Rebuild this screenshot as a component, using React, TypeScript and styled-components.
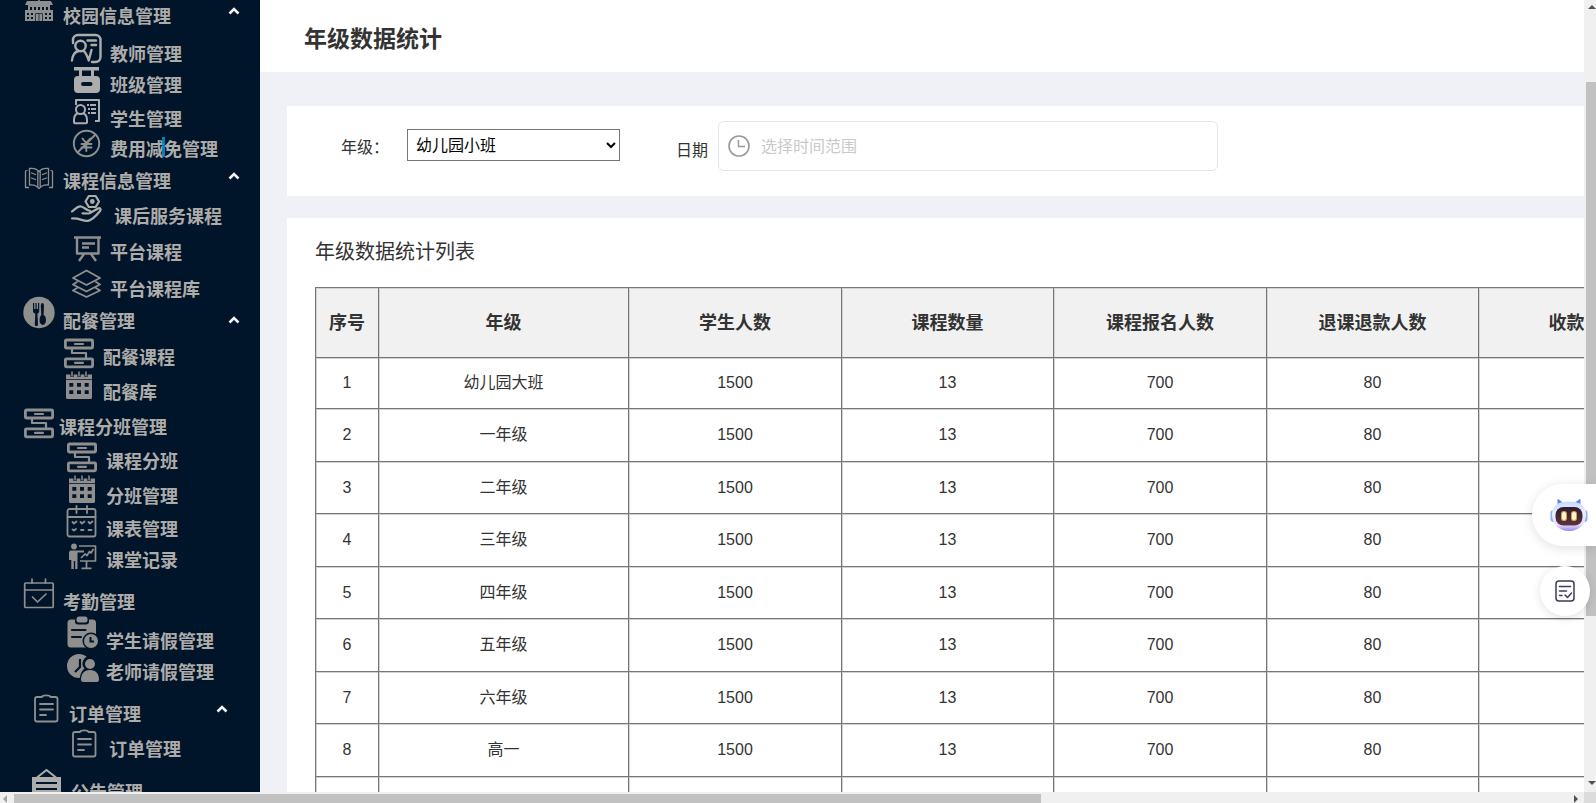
import React from "react";
import styled, { createGlobalStyle } from "styled-components";

const NAVY = "#001529";

const GlobalStyle = createGlobalStyle`
  *, *::before, *::after { box-sizing: border-box; }
  body {
    margin: 0;
    font-family: "Liberation Sans", "Noto Sans CJK SC", sans-serif;
    font-size: 16px;
    color: #333;
    overflow: hidden;
  }
`;

/* ---------- page frame ---------- */

const Frame = styled.div`
  display: grid;
  grid-template-columns: minmax(0, 1fr) 12px;
  grid-template-rows: minmax(0, 1fr) 11px;
  height: 100vh;
  background: #f0f0f0;
`;

const Shell = styled.div`
  display: flex;
  overflow: hidden;
  background: #f0f1f6;
`;

const VTrack = styled.div`
  display: flex;
  flex-direction: column;
  align-items: flex-end;
  padding: 3px 0 6px 2px;
  overflow: hidden;
`;

const HTrack = styled.div`
  display: flex;
  align-items: flex-end;
  padding: 2px 4px 0 2px;
  overflow: hidden;
`;

const VThumb = styled.div`
  width: 100%;
  flex: 534 0 0;
  background: #c1c1c1;
`;

const HThumb = styled.div`
  align-self: stretch;
  flex: 1027 0 0;
  background: #c1c1c1;
`;

const TrackSpace = styled.div<{ $grow: number }>`
  flex: ${(p) => p.$grow} 0 0;
`;

const ArrowSvg = styled.svg<{ $tone?: string }>`
  display: block;
  flex: none;
  fill: ${(p) => p.$tone ?? "#505050"};
`;

const Corner = styled.div`
  background: #dcdcdc;
`;

/* ---------- sidebar ---------- */

const Sidebar = styled.nav`
  flex: 0 0 260px;
  background: ${NAVY};
  color: #aeacaa;
  overflow: hidden;
`;

const List = styled.ul`
  list-style: none;
  margin: 0;
  padding: 0;
`;

interface RowProps {
  $h: number;
  $indent: number;
  $gap?: number;
  $end?: number;
}

const rowStyle = (p: RowProps) => `
  display: flex;
  align-items: flex-end;
  width: 100%;
  height: ${p.$h}px;
  padding: 0 ${p.$end ?? 20}px 0 ${p.$indent}px;
  gap: ${p.$gap ?? 8}px;
  border: 0;
  background: none;
  color: inherit;
  font: bold 18px/22px "Liberation Sans", "Noto Sans CJK SC", sans-serif;
  text-align: left;
  text-decoration: none;
  white-space: nowrap;
  cursor: pointer;
`;

const GroupButton = styled.button<RowProps>`
  ${rowStyle}
`;

const NavLink = styled.a<RowProps>`
  ${rowStyle}
`;

const IconBox = styled.svg<{ $tone: string }>`
  flex: none;
  display: block;
  width: 32px;
  height: 32px;
  overflow: visible;
  color: ${(p) => p.$tone};
`;

const Label = styled.span`
  position: relative;
`;

const Caret = styled.span`
  position: absolute;
  left: 52px;
  top: -2px;
  width: 3px;
  height: 20px;
  background: #0091cc;
  opacity: 0.85;
`;

const Chevron = styled.svg<{ $h: number }>`
  display: block;
  flex: none;
  width: 12px;
  height: ${(p) => p.$h}px;
  margin-left: auto;
`;

type IconName =
  | "school" | "teacher" | "class" | "student" | "yen" | "book" | "hand" | "board"
  | "layers" | "meal" | "flow" | "calendar" | "timetable" | "record" | "attendance"
  | "leave" | "teacherLeave" | "order" | "notice";

const line = (width: number) => ({
  fill: "none",
  stroke: "currentColor",
  strokeWidth: width,
  strokeLinejoin: "round" as const,
  strokeLinecap: "round" as const,
});

const icons: Record<IconName, React.ReactNode> = {
  school: (
    <>
      <path fill="currentColor" d="M4 5h24l2 4H2z M15.2 1h1.6v4h-1.6z" />
      <path
        fill="currentColor"
        fillRule="evenodd"
        d="M5 9h22v5h3v11H2V14h3z M7 11v3h2v-3z M11 11v3h2v-3z M15 11v3h2v-3z M19 11v3h2v-3z M23 11v3h2v-3z M4 17v2h2v-2z M8 17v2h2v-2z M22 17v2h2v-2z M26 17v2h2v-2z M4 21v2h2v-2z M8 21v2h2v-2z M22 21v2h2v-2z M26 21v2h2v-2z"
      />
      <path d="M12.5 25v-7.5h7V25M16 17.5V25" fill="none" stroke={NAVY} strokeWidth="0.7" />
    </>
  ),
  teacher: (
    <g {...line(2.4)}>
      <path d="M3 9V6a5 5 0 0 1 5-5h17.500a5 5 0 0 1 5 5v17a5 5 0 0 1-5 5H22" />
      <circle cx="10.500" cy="12" r="5.200" />
      <path d="M2 26.500c.4-5 3-8.500 6.500-9.500M13.500 17c2.500 1.500 3.500 4 5.200 9.500l2.800-10.500M17.500 6.500h8.500M21.500 11h4.500" />
    </g>
  ),
  class: (
    <path
      fill="currentColor"
      fillRule="evenodd"
      d="M4 2h25v3.500h-5V11h2a4 4 0 0 1 4 4v9a4 4 0 0 1-4 4H8a4 4 0 0 1-4-4v-9a4 4 0 0 1 4-4h1V5.500H4z M12 5.500V11h9V5.500z M13 17a2 2 0 0 0 0 4h7.500a2 2 0 0 0 0-4z"
    />
  ),
  student: (
    <g {...line(2)} strokeLinecap="butt">
      <path d="M6 6V1h23v21h-4" />
      <circle cx="10.500" cy="10.500" r="4.500" />
      <path d="M7.500 14.500C5 15.500 4 18 4 21v2.200q0 1 1 1h11q1 0 1-1V21c0-3-1-5.500-3.500-6.500" />
      <path d="M17 6h9M18 10h8M18 14h8" strokeDasharray="2 1 7 0" />
    </g>
  ),
  yen: (
    <g {...line(1.9)}>
      <circle cx="16.500" cy="14.500" r="12.700" />
      <path d="M7.500 23.500 25.500 5.500M12.500 9.500l3.500 4.500 4.500-4.500M11.500 15h10M11.500 18.500h10M16.300 14v8" />
    </g>
  ),
  book: (
    <g {...line(1.3)}>
      <path d="M16 10.500C13.500 7.500 10 7 6.500 7.500v16.500c3.500-.5 7 .5 9.500 3.500 2.500-3 6-4 9.500-3.500V7.500C22 7 18.500 7.500 16 10.500zM14.800 10.500v16M17.200 10.500v16" />
      <path d="M4 9.500 2.500 10v16.500h3M28 9.500l1.500.500v16.500h-3" />
      <path d="M8.500 12l4 1.500M8.500 17l4 1.500M23.500 12l-4 1.500M23.500 17l-4 1.500" />
    </g>
  ),
  hand: (
    <g {...line(2.2)}>
      <path d="M15.500 5.500 18.800 0h6.900L29 5.500 25.700 11h-6.900z" />
      <circle cx="22.300" cy="5.500" r="1.300" />
      <path d="M2 15.500c3-2.500 6-5.500 9-5 3 .5 5 3.500 8 4 2.500.5 2 2.800-.5 3l-6-.2M20 17l8-4.500c2-1 3.500.5 2 2.500-4 5-8 9-12 9.800-5 .8-8-2.800-16-2.300" />
    </g>
  ),
  board: (
    <g {...line(2.4)} strokeLinecap="butt">
      <path d="M4 5.500h27M7 5.500V21.500h21.500V5.500M12 11.500h13M12 15.500h7M14 22l-5 7M21 22l5 7" />
    </g>
  ),
  layers: (
    <g {...line(1.9)}>
      <path d="M16.500 1.500 30 9l-13.500 7L3 9z" />
      <path d="M7 13l-4 2.500 13.500 7L30 15.500 26 13M7 19l-4 2.500 13.500 6.500L30 21.500 26 19" />
    </g>
  ),
  meal: (
    <>
      <circle cx="16" cy="11.500" r="15.700" fill="currentColor" />
      <path
        fill={NAVY}
        d="M10 2h1.200v6h1.300V2h1.200v6H15V2h1.200v8c0 1.500-.8 2.300-1.800 2.800l.6 10.500c0 2.500-3.200 2.500-3.200 0l.5-10.500c-1.400-.5-2.300-1.300-2.300-2.800z M17.800 5c0-4 3.200-4 3.200 0l-.4 9c2 1 2.400 3 2.400 5.300 0 2.700-1.300 4.700-3.200 4.700s-3.200-2-3.200-4.700c0-2.300.5-4.300 1.700-5.300z"
      />
    </>
  ),
  flow: (
    <g {...line(2.8)}>
      <rect x="2.400" y="3" width="27.200" height="8" rx="1" />
      <rect x="2.400" y="21.800" width="27.200" height="8" rx="1" />
      <path d="M12 7h8M12 25.800h8M9 11v5h14v6" strokeWidth="2.200" />
    </g>
  ),
  calendar: (
    <>
      <path
        fill="currentColor"
        fillRule="evenodd"
        d="M3 2.500h26V7H3z M3 7.800h26V25.500q0 1.500-1.500 1.500h-23Q3 27 3 25.500z M6.300 11V14.800h4V11z M14 11V14.800h4V11z M21.700 11V14.800h4V11z M6.300 18.200V22h4V18.200z M14 18.200V22h4V18.200z M21.700 18.200V22h4V18.200z"
      />
      <path d="M9 1v4M16 1v4M23 1v4" stroke={NAVY} strokeWidth="3.200" />
      <path d="M9-.5v5M16-.5v5M23-.5v5" stroke="currentColor" strokeWidth="1.500" />
    </>
  ),
  timetable: (
    <g {...line(1.800)}>
      <rect x="1.500" y="0" width="28" height="27.500" rx="2" />
      <path d="M1.500 8h28M10.500-3v7M21-3v7" />
      <path d="M6.500 13l1.500 1.500 2.500-2M14.500 13l1.500 1.500 2.500-2M22.500 13l1.500 1.500 2.500-2M6.500 20.500l1.500 1 2-1.500M15 21h2.500M22.500 21h3" />
    </g>
  ),
  record: (
    <g {...line(1.700)} strokeLinecap="butt">
      <circle cx="8" cy="6.500" r="2.900" fill="currentColor" stroke="none" />
      <path fill="currentColor" stroke="none" d="M5 10.500h13v2h-6.500V29H9.200v-8H7.800v8H5.300V20H3v-6.500q0-3 2-3z" />
      <path d="M13 6h16.500v15H14M20.500 21v6.500M15.500 28.300h10M15 18l4-4 2 1.500 2.500-4 1.500 1.500 2.500-4" />
    </g>
  ),
  attendance: (
    <g {...line(1.700)}>
      <rect x="1.700" y="1" width="28.500" height="24.500" rx="1" />
      <path d="M1.700 8h28.500M9-3v4M22.500-3v4M9.500 15l5 5 8.500-8" />
    </g>
  ),
  leave: (
    <>
      <rect x="1.500" y="-1.500" width="28.500" height="28" rx="3.500" fill="currentColor" />
      <rect x="9" y="-4" width="14" height="7.500" rx="3" fill={NAVY} />
      <rect x="10.500" y="-4.500" width="11" height="6" rx="2.500" fill="currentColor" />
      <path d="M6 9h13.500M6 16h9" stroke={NAVY} strokeWidth="2.200" strokeLinecap="round" />
      <circle cx="25" cy="20" r="8.500" fill={NAVY} />
      <circle cx="25" cy="20" r="7" fill="currentColor" />
      <path d="M24.500 16v4.500H28" fill="none" stroke={NAVY} strokeWidth="2" />
    </>
  ),
  teacherLeave: (
    <>
      <circle cx="13" cy="14" r="12" fill="currentColor" />
      <path d="M14 7v8l-5 5" fill="none" stroke={NAVY} strokeWidth="2.200" />
      <path fill={NAVY} d="M24 4a7.500 7.500 0 0 1 5.500 12.500c3 2 4.500 6 4.500 14.500H13.500c0-8 2-12 5-14.500A7.500 7.500 0 0 1 24 4z" />
      <circle cx="24" cy="12" r="5" fill="currentColor" />
      <path fill="currentColor" d="M24 18c6 0 9 4 9 9.500q0 2.500-2.500 2.500h-13q-2.500 0-2.500-2.500C15 22 18 18 24 18z" />
    </>
  ),
  order: (
    <g {...line(1.800)}>
      <path d="M13 3H8q-2 0-2 2v20.500q0 2 2 2h18.500q2 0 2-2V5q0-2-2-2h-5C21 .8 13.500.8 13 3z" />
      <path d="M11 10h13M11 15.500h13M11 21h6" />
    </g>
  ),
  notice: (
    <>
      <path d="M6 5.500 15.500-2 25 5.500" fill="none" stroke="currentColor" strokeWidth="2" />
      <path fill="currentColor" d="M1 5h29v28H1z" />
      <path d="M5 11h21M5 17h21" stroke={NAVY} strokeWidth="1.800" />
    </>
  ),
};

interface Item {
  text: string;
  icon: IconName;
  h: number;
  gap?: number;
  bright?: boolean;
  caret?: boolean;
}

interface Group extends Item {
  indent: number;
  open?: boolean;
  chevron?: number;
  end?: number;
  childIndent?: number;
  children?: Item[];
}

const groups: Group[] = [
  {
    text: "校园信息管理", icon: "school", h: 28, indent: 23, open: true, childIndent: 70,
    children: [
      { text: "教师管理", icon: "teacher", h: 38, bright: true },
      { text: "班级管理", icon: "class", h: 31, bright: true },
      { text: "学生管理", icon: "student", h: 34, bright: true },
      { text: "费用减免管理", icon: "yen", h: 30, caret: true },
    ],
  },
  {
    text: "课程信息管理", icon: "book", h: 32, indent: 23, open: true, childIndent: 70,
    children: [
      { text: "课后服务课程", icon: "hand", h: 35, gap: 12, bright: true },
      { text: "平台课程", icon: "board", h: 36 },
      { text: "平台课程库", icon: "layers", h: 37 },
    ],
  },
  {
    text: "配餐管理", icon: "meal", h: 32, indent: 23, open: true, chevron: 20, childIndent: 63,
    children: [
      { text: "配餐课程", icon: "flow", h: 36 },
      { text: "配餐库", icon: "calendar", h: 35 },
    ],
  },
  {
    text: "课程分班管理", icon: "flow", h: 35, indent: 23, gap: 4, childIndent: 66,
    children: [
      { text: "课程分班", icon: "flow", h: 34 },
      { text: "分班管理", icon: "calendar", h: 35 },
      { text: "课表管理", icon: "timetable", h: 33 },
      { text: "课堂记录", icon: "record", h: 31 },
    ],
  },
  {
    text: "考勤管理", icon: "attendance", h: 42, indent: 23, childIndent: 66,
    children: [
      { text: "学生请假管理", icon: "leave", h: 39 },
      { text: "老师请假管理", icon: "teacherLeave", h: 31 },
    ],
  },
  {
    text: "订单管理", icon: "order", h: 42, indent: 29, open: true, end: 32, childIndent: 67,
    children: [{ text: "订单管理", icon: "order", h: 35, gap: 10 }],
  },
  { text: "公告管理", icon: "notice", h: 43, indent: 31, bright: true },
];

const NavIcon = ({ name, bright }: { name: IconName; bright?: boolean }) => (
  <IconBox viewBox="0 0 32 32" aria-hidden="true" $tone={bright ? "#adadad" : "#8f8f8f"}>
    {icons[name]}
  </IconBox>
);

const OpenMark = ({ height = 24 }: { height?: number }) => (
  <Chevron $h={height} viewBox={`0 0 12 ${height}`} aria-hidden="true">
    <path d="M1.500 9.500 6 5l4.500 4.500" fill="none" stroke="#f2f2f2" strokeWidth="2.600" />
  </Chevron>
);

const SideNav = () => (
  <Sidebar aria-label="主菜单">
    <List>
      {groups.map((g) => (
        <li key={g.text}>
          <GroupButton type="button" $h={g.h} $indent={g.indent} $gap={g.gap} $end={g.end}>
            <NavIcon name={g.icon} bright={g.bright} />
            <Label>{g.text}</Label>
            {g.open && <OpenMark height={g.chevron} />}
          </GroupButton>
          {g.children && (
            <List>
              {g.children.map((c) => (
                <li key={c.text}>
                  <NavLink href="#" $h={c.h} $indent={g.childIndent ?? 70} $gap={c.gap}>
                    <NavIcon name={c.icon} bright={c.bright} />
                    <Label>
                      {c.text}
                      {c.caret && <Caret />}
                    </Label>
                  </NavLink>
                </li>
              ))}
            </List>
          )}
        </li>
      ))}
    </List>
  </Sidebar>
);

/* ---------- content ---------- */

const Content = styled.main`
  flex: 1;
  min-width: 0;
  overflow: hidden;
`;

const PageHeader = styled.header`
  display: flex;
  align-items: center;
  height: 72px;
  padding: 6px 44px 0;
  background: #fff;
`;

const PageTitle = styled.h1`
  margin: 0;
  font-size: 23px;
  line-height: 32px;
`;

const Filters = styled.form`
  display: flex;
  align-items: center;
  height: 90px;
  margin: 34px 0 22px 27px;
  padding: 0 54px 10px;
  background: #fff;
`;

const GradeLabel = styled.label`
  width: 66px;
  padding-top: 4px;
  line-height: 24px;
`;

const GradeSelect = styled.select`
  width: 213px;
  height: 32px;
  margin-bottom: 2px;
  padding: 0 4px;
  border: 1px solid #767676;
  border-radius: 0;
  background: #fff;
  color: #000;
  font: 16px "Liberation Sans", "Noto Sans CJK SC", sans-serif;
`;

const DateLabel = styled.label`
  padding-top: 10px;
  margin: 0 10px 0 56px;
  line-height: 24px;
`;

const DateField = styled.div`
  display: flex;
  align-items: center;
  gap: 11px;
  flex: 0 1 500px;
  height: 50px;
  padding: 0 9px;
  border: 1px solid #e4e4e4;
  border-radius: 6px;
`;

const DateInput = styled.input`
  flex: 1;
  min-width: 0;
  padding: 2px 0 0;
  border: 0;
  outline: 0;
  background: none;
  color: #333;
  font: 16px/24px "Liberation Sans", "Noto Sans CJK SC", sans-serif;
  &::placeholder { color: #c9c9c9; opacity: 1; }
`;

const TableCard = styled.section`
  margin-left: 27px;
  padding: 19px 0 40px 28px;
  background: #fff;
  overflow: hidden;
`;

const CardTitle = styled.h2`
  margin: 0 0 20px;
  font-size: 20px;
  line-height: 30px;
  font-weight: 400;
`;

const Grid = styled.table`
  table-layout: fixed;
  width: 1376px;
  border-spacing: 0;
  border-right: 1px solid #777;
  border-bottom: 1px solid #777;
  text-align: center;
`;

const Col = styled.col<{ $w: number }>`
  width: ${(p) => p.$w}px;
`;

const Th = styled.th`
  height: 70px;
  padding: 1px 0 0;
  border: solid #777;
  border-width: 1px 0 0 1px;
  box-shadow: inset 1px 1px 0 #d2d2d2;
  background: #f1f1f1;
  font-size: 18px;
  line-height: 24px;
`;

const Td = styled.td`
  padding: 0;
  border: solid #777;
  border-width: 1px 0 0 1px;
  box-shadow: inset 1px 1px 0 #d2d2d2;
  line-height: 24px;
`;

const BodyRow = styled.tr`
  height: 52px;
  &:nth-child(even) { height: 53px; }
  &:first-child { height: 51px; }
`;

const columns: [string, number][] = [
  ["序号", 63],
  ["年级", 250],
  ["学生人数", 213],
  ["课程数量", 212],
  ["课程报名人数", 213],
  ["退课退款人数", 212],
  ["收款金额", 212],
];

const grades = ["幼儿园大班", "一年级", "二年级", "三年级", "四年级", "五年级", "六年级", "高一", "高二", "高三"];

/* ---------- floating tools ---------- */

const FloatTools = styled.div`
  position: fixed;
  top: 484px;
  right: 0;
  display: flex;
  flex-direction: column;
  align-items: flex-end;
  gap: 20px;
`;

const AssistantButton = styled.button`
  display: flex;
  align-items: center;
  width: 64px;
  height: 62px;
  padding: 0 0 0 18px;
  border: 0;
  border-radius: 31px 0 0 31px;
  background: #fff;
  box-shadow: 0 2px 12px rgba(0, 0, 0, 0.12);
  cursor: pointer;
`;

const NoteButton = styled.button`
  display: flex;
  align-items: center;
  justify-content: center;
  width: 50px;
  height: 50px;
  margin-right: 6px;
  padding: 0;
  border: 0;
  border-radius: 50%;
  background: #fff;
  box-shadow: 0 2px 10px rgba(0, 0, 0, 0.12);
  cursor: pointer;
`;

const Robot = () => (
  <svg width="38" height="34" viewBox="0 0 38 34" aria-hidden="true">
    <defs>
      <linearGradient id="shell" x1="0" y1="0" x2="0" y2="1">
        <stop offset="0" stopColor="#c9d9ff" />
        <stop offset="0.4" stopColor="#f1edff" />
        <stop offset="0.8" stopColor="#e6dcfb" />
        <stop offset="1" stopColor="#8f86ee" />
      </linearGradient>
      <linearGradient id="face" x1="0" y1="0" x2="0" y2="1">
        <stop offset="0" stopColor="#2c1d33" />
        <stop offset="1" stopColor="#5b3440" />
      </linearGradient>
    </defs>
    <path d="M7.500 9V2q0-1.500 1.300-.5L15 6zM30.500 9V2q0-1.500-1.300-.5L23 6z" fill="#5b83f7" />
    <rect x="0.500" y="12" width="6" height="12" rx="3" fill="#86b4fb" />
    <rect x="31.500" y="12" width="6" height="12" rx="3" fill="#86b4fb" />
    <path d="M19 3.500c11 0 17 4.500 17 13S30 33 19 33 2 25 2 16.500 8 3.500 19 3.500z" fill="url(#shell)" />
    <rect x="5.500" y="9" width="27" height="18.500" rx="8" fill="url(#face)" />
    <rect x="11" y="13" width="6" height="10" rx="2.800" fill="#e29a35" />
    <rect x="21" y="13" width="6" height="10" rx="2.800" fill="#e29a35" />
    <rect x="12" y="14" width="4" height="8" rx="2" fill="#fff8dc" />
    <rect x="22" y="14" width="4" height="8" rx="2" fill="#fff8dc" />
  </svg>
);

export default function App() {
  return (
    <>
      <GlobalStyle />
      <Frame>
        <Shell>
          <SideNav />
          <Content>
            <PageHeader>
              <PageTitle>年级数据统计</PageTitle>
            </PageHeader>
            <Filters>
              <GradeLabel htmlFor="grade">年级：</GradeLabel>
              <GradeSelect id="grade" defaultValue="幼儿园小班">
                <option>幼儿园小班</option>
              </GradeSelect>
              <DateLabel htmlFor="range">日期</DateLabel>
              <DateField>
                <svg width="22" height="22" viewBox="0 0 22 22" fill="none" stroke="#999" aria-hidden="true">
                  <circle cx="11" cy="11" r="10" strokeWidth="1.600" />
                  <path d="M10.500 5v6.500H17" strokeWidth="1.400" />
                </svg>
                <DateInput id="range" placeholder="选择时间范围" />
              </DateField>
            </Filters>
            <TableCard>
              <CardTitle>年级数据统计列表</CardTitle>
              <Grid>
                <colgroup>
                  {columns.map(([name, w]) => (
                    <Col key={name} $w={w} />
                  ))}
                </colgroup>
                <thead>
                  <tr>
                    {columns.map(([name]) => (
                      <Th key={name} scope="col">{name}</Th>
                    ))}
                  </tr>
                </thead>
                <tbody>
                  {grades.map((grade, i) => (
                    <BodyRow key={grade}>
                      <Td>{i + 1}</Td>
                      <Td>{grade}</Td>
                      <Td>1500</Td>
                      <Td>13</Td>
                      <Td>700</Td>
                      <Td>80</Td>
                      <Td />
                    </BodyRow>
                  ))}
                </tbody>
              </Grid>
            </TableCard>
          </Content>
        </Shell>
        <VTrack>
          <ArrowSvg width="8" height="6" viewBox="0 0 8 6"><path d="M0 6 4 2l4 4z" /></ArrowSvg>
          <TrackSpace $grow={73} />
          <VThumb />
          <TrackSpace $grow={164} />
          <ArrowSvg width="8" height="6" viewBox="0 0 8 6"><path d="M0 1h8L4 5z" /></ArrowSvg>
        </VTrack>
        <HTrack>
          <ArrowSvg width="12" height="8" viewBox="0 0 12 8" $tone="#a3a3a3"><path d="M5 0v8L1 4z" /></ArrowSvg>
          <HThumb />
          <TrackSpace $grow={533} />
          <ArrowSvg width="6" height="8" viewBox="0 0 6 8"><path d="M0 0v8l4-4z" /></ArrowSvg>
        </HTrack>
        <Corner />
      </Frame>
      <FloatTools>
        <AssistantButton type="button" aria-label="智能助手">
          <Robot />
        </AssistantButton>
        <NoteButton type="button" aria-label="笔记">
          <svg width="20" height="22" viewBox="0 0 20 22" fill="none" stroke="#3a3a5a" strokeWidth="1.500" strokeLinecap="round" strokeLinejoin="round" aria-hidden="true">
            <rect x="1" y="1" width="18" height="20" rx="3" />
            <path d="M4.500 6.500h11M4.500 11h7M4.500 15.500h2.500M10 15l2.500 2.500 4-4.500" />
          </svg>
        </NoteButton>
      </FloatTools>
    </>
  );
}
